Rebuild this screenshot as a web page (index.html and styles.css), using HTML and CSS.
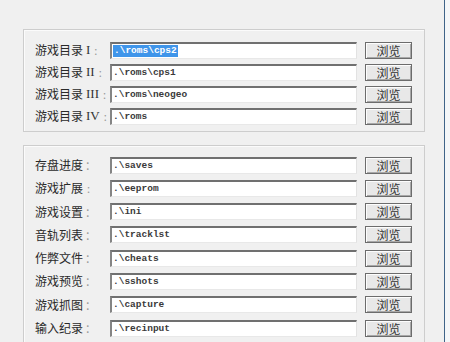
FILE: index.html
```html
<!DOCTYPE html>
<html lang="zh-CN">
<head>
<meta charset="utf-8">
<title>目录设置</title>
<link rel="stylesheet" href="styles.css">
</head>
<body>
<div class="window">
  <div class="group group-dirs">
    <div class="row">
      <div class="label">游戏目录<span class="roman">I</span><span class="colon">:</span></div>
      <div class="field"><span class="sel">.\roms\cps2</span></div>
      <div class="btn">浏览</div>
    </div>
    <div class="row">
      <div class="label">游戏目录<span class="roman">II</span><span class="colon">:</span></div>
      <div class="field">.\roms\cps1</div>
      <div class="btn">浏览</div>
    </div>
    <div class="row">
      <div class="label">游戏目录<span class="roman">III</span><span class="colon">:</span></div>
      <div class="field">.\roms\neogeo</div>
      <div class="btn">浏览</div>
    </div>
    <div class="row">
      <div class="label">游戏目录<span class="roman">IV</span><span class="colon">:</span></div>
      <div class="field">.\roms</div>
      <div class="btn">浏览</div>
    </div>
  </div>

  <div class="group group-misc">
    <div class="row">
      <div class="label">存盘进度<span class="colon wide">：</span></div>
      <div class="field">.\saves</div>
      <div class="btn">浏览</div>
    </div>
    <div class="row">
      <div class="label">游戏扩展<span class="colon">:</span></div>
      <div class="field">.\eeprom</div>
      <div class="btn">浏览</div>
    </div>
    <div class="row">
      <div class="label">游戏设置<span class="colon wide">：</span></div>
      <div class="field">.\ini</div>
      <div class="btn">浏览</div>
    </div>
    <div class="row">
      <div class="label">音轨列表<span class="colon wide">：</span></div>
      <div class="field">.\tracklst</div>
      <div class="btn">浏览</div>
    </div>
    <div class="row">
      <div class="label">作弊文件<span class="colon wide">：</span></div>
      <div class="field">.\cheats</div>
      <div class="btn">浏览</div>
    </div>
    <div class="row">
      <div class="label">游戏预览<span class="colon wide">：</span></div>
      <div class="field">.\sshots</div>
      <div class="btn">浏览</div>
    </div>
    <div class="row">
      <div class="label">游戏抓图<span class="colon wide">：</span></div>
      <div class="field">.\capture</div>
      <div class="btn">浏览</div>
    </div>
    <div class="row">
      <div class="label">输入纪录<span class="colon wide">：</span></div>
      <div class="field">.\recinput</div>
      <div class="btn">浏览</div>
    </div>
  </div>
</div>
</body>
</html>
```

FILE: styles.css
```css
html, body {
  margin: 0;
  padding: 0;
  background: #f4f6f8;
  overflow: hidden;
}

.window {
  box-sizing: border-box;
  width: 445px;
  height: 342px;
  padding: 29px 0 0 23px;
  background: #f0f0f0;
  border-right: 1px solid #3f6388;
  font-family: "Noto Sans CJK SC", "Noto Sans", sans-serif;
  font-size: 12px;
  color: #222;
  overflow: hidden;
}

.group {
  box-sizing: border-box;
  width: 402px;
  border: 1px solid #cdcdcd;
  box-shadow: inset 1px 1px 0 #fbfbfb;
  padding: 0 12px 0 11px;
  display: flex;
  flex-direction: column;
}

.group-dirs {
  height: 103px;
  padding-top: 11px;
  gap: 4px;
}

.group-misc {
  margin-top: 13px;
  height: 197px;
  border-bottom: none;
  padding-top: 10px;
  gap: 5.3px;
}

.row {
  display: flex;
  align-items: center;
  height: 18px;
  flex: none;
}

.label {
  width: 75px;
  flex: none;
  display: flex;
  align-items: center;
  white-space: nowrap;
  line-height: 18px;
  color: #2a2a2a;
}

.roman {
  font-family: "Liberation Serif", serif;
  font-size: 13px;
  margin-left: 3px;
  color: #333;
}

.colon {
  color: #9a9a9a;
  margin-left: 4px;
  font-size: 11px;
}

.colon.wide {
  margin-left: 2px;
}

.field {
  box-sizing: border-box;
  width: 247px;
  height: 17px;
  flex: none;
  background: #fff;
  border-top: 2px solid #707070;
  border-left: 2px solid #858585;
  border-right: 1px solid #e2e2e2;
  border-bottom: 1px solid #e8e8e8;
  padding-left: 1px;
  font-family: "Liberation Mono", monospace;
  font-weight: bold;
  font-size: 9.5px;
  line-height: 13px;
  color: #3a3a3a;
  white-space: nowrap;
  overflow: hidden;
}

.sel {
  display: inline-block;
  background: #3f95ea;
  color: #fff;
  line-height: 12px;
  padding: 0 1px;
}

.btn {
  box-sizing: border-box;
  width: 47px;
  height: 17px;
  margin-left: 8px;
  flex: none;
  display: flex;
  align-items: center;
  justify-content: center;
  background: #e8e8e8;
  border: 1px solid #6c6c6c;
  box-shadow: inset 1px 1px 0 #fdfdfd, inset -1px -1px 0 #a8a8a8;
  color: #333;
  font-size: 12px;
  line-height: 15px;
}
```
